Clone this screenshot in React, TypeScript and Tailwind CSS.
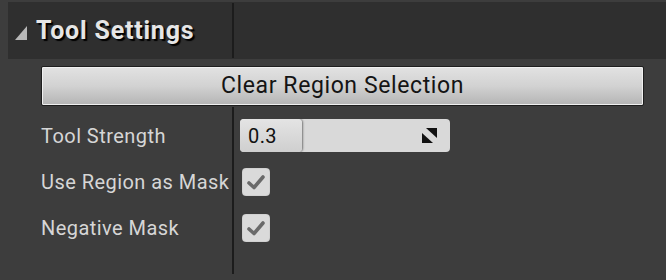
import React from "react";

function Check() {
  return (
    <div className="w-[28px] h-[28px] rounded-[4px] bg-[#dadada] flex items-center justify-center shadow-[inset_0_0_1px_rgba(0,0,0,0.4)]">
      <svg width="20" height="18" viewBox="0 0 20 18">
        <path d="M3 10 L8 14.5 L17 4" fill="none" stroke="#6a6a6a" strokeWidth="3.6" strokeLinecap="round" strokeLinejoin="round" />
      </svg>
    </div>
  );
}

export default function App() {
  const font = { fontFamily: "Roboto, 'Liberation Sans', sans-serif" };
  return (
    <div className="w-[666px] h-[280px] bg-[#3d3d3d] flex flex-col overflow-hidden" style={font}>
      <div className="pl-[8px] pt-[2px]">
        <div className="h-[57px] bg-[#2f2f2f] flex items-stretch">
          <div className="w-[224px] flex items-center">
            <svg width="14" height="16" viewBox="0 0 14 16" className="ml-[6px] mt-[5px]">
              <path d="M13 1 L13 15 L1 15 Z" fill="#b8b8b8" />
            </svg>
            <span className="ml-[8px] text-[25px] font-bold text-[#e6e6e6] tracking-[0.8px] [text-shadow:2px_2px_1px_#000]">
              Tool Settings
            </span>
          </div>
          <div className="w-[2px] bg-[#1c1c1c] my-[1px]" />
          <div className="flex-1" />
        </div>
      </div>
      <div className="pl-[41px] pt-[7px]">
        <div className="w-[603px] h-[40px] rounded-[2px] border border-[#1e1e1e] bg-gradient-to-b from-[#e2e2e2] via-[#d2d2d2] to-[#b4b4b4] shadow-[inset_0_0_0_1px_#f0f0f0] flex items-center justify-center">
          <span className="text-[23px] tracking-[0.6px] text-[#141414]">Clear Region Selection</span>
        </div>
      </div>
      <div className="flex mt-[1px] h-[167px]">
        <div className="w-[232px] pt-[5px] flex flex-col">
          <div className="h-[47px] flex items-center pl-[41px] text-[20px] tracking-[0.45px] text-[#d6d6d6]">Tool Strength</div>
          <div className="h-[46px] flex items-center pl-[41px] text-[20px] tracking-[0.45px] text-[#d6d6d6] whitespace-nowrap">Use Region as Mask</div>
          <div className="h-[46px] flex items-center pl-[41px] text-[20px] tracking-[0.45px] text-[#d6d6d6]">Negative Mask</div>
        </div>
        <div className="border-l-2 border-[#1c1c1c] pl-[6px] pt-[5px] flex flex-col">
          <div className="h-[47px] flex items-center">
            <div className="w-[210px] h-[33px] rounded-[4px] bg-[#d9d9d9] flex items-stretch overflow-hidden">
              <div className="w-[62px] bg-gradient-to-b from-[#e4e4e4] to-[#cfcfcf] rounded-r-[4px] shadow-[1px_0_2px_rgba(0,0,0,0.45)] flex items-center pl-[8px] text-[20px] tracking-[0.4px] text-[#111]">
                0.3
              </div>
              <div className="flex-1 flex items-center justify-end pr-[12px]">
                <svg width="17" height="17" viewBox="0 0 17 17">
                  <path d="M5 1 L16 1 L16 11 Z" fill="#111" />
                  <path d="M1 6 L1 16 L12 16 Z" fill="#111" />
                </svg>
              </div>
            </div>
          </div>
          <div className="h-[46px] flex items-center pl-[2px]">
            <Check />
          </div>
          <div className="h-[46px] flex items-center pl-[2px]">
            <Check />
          </div>
        </div>
      </div>
    </div>
  );
}
